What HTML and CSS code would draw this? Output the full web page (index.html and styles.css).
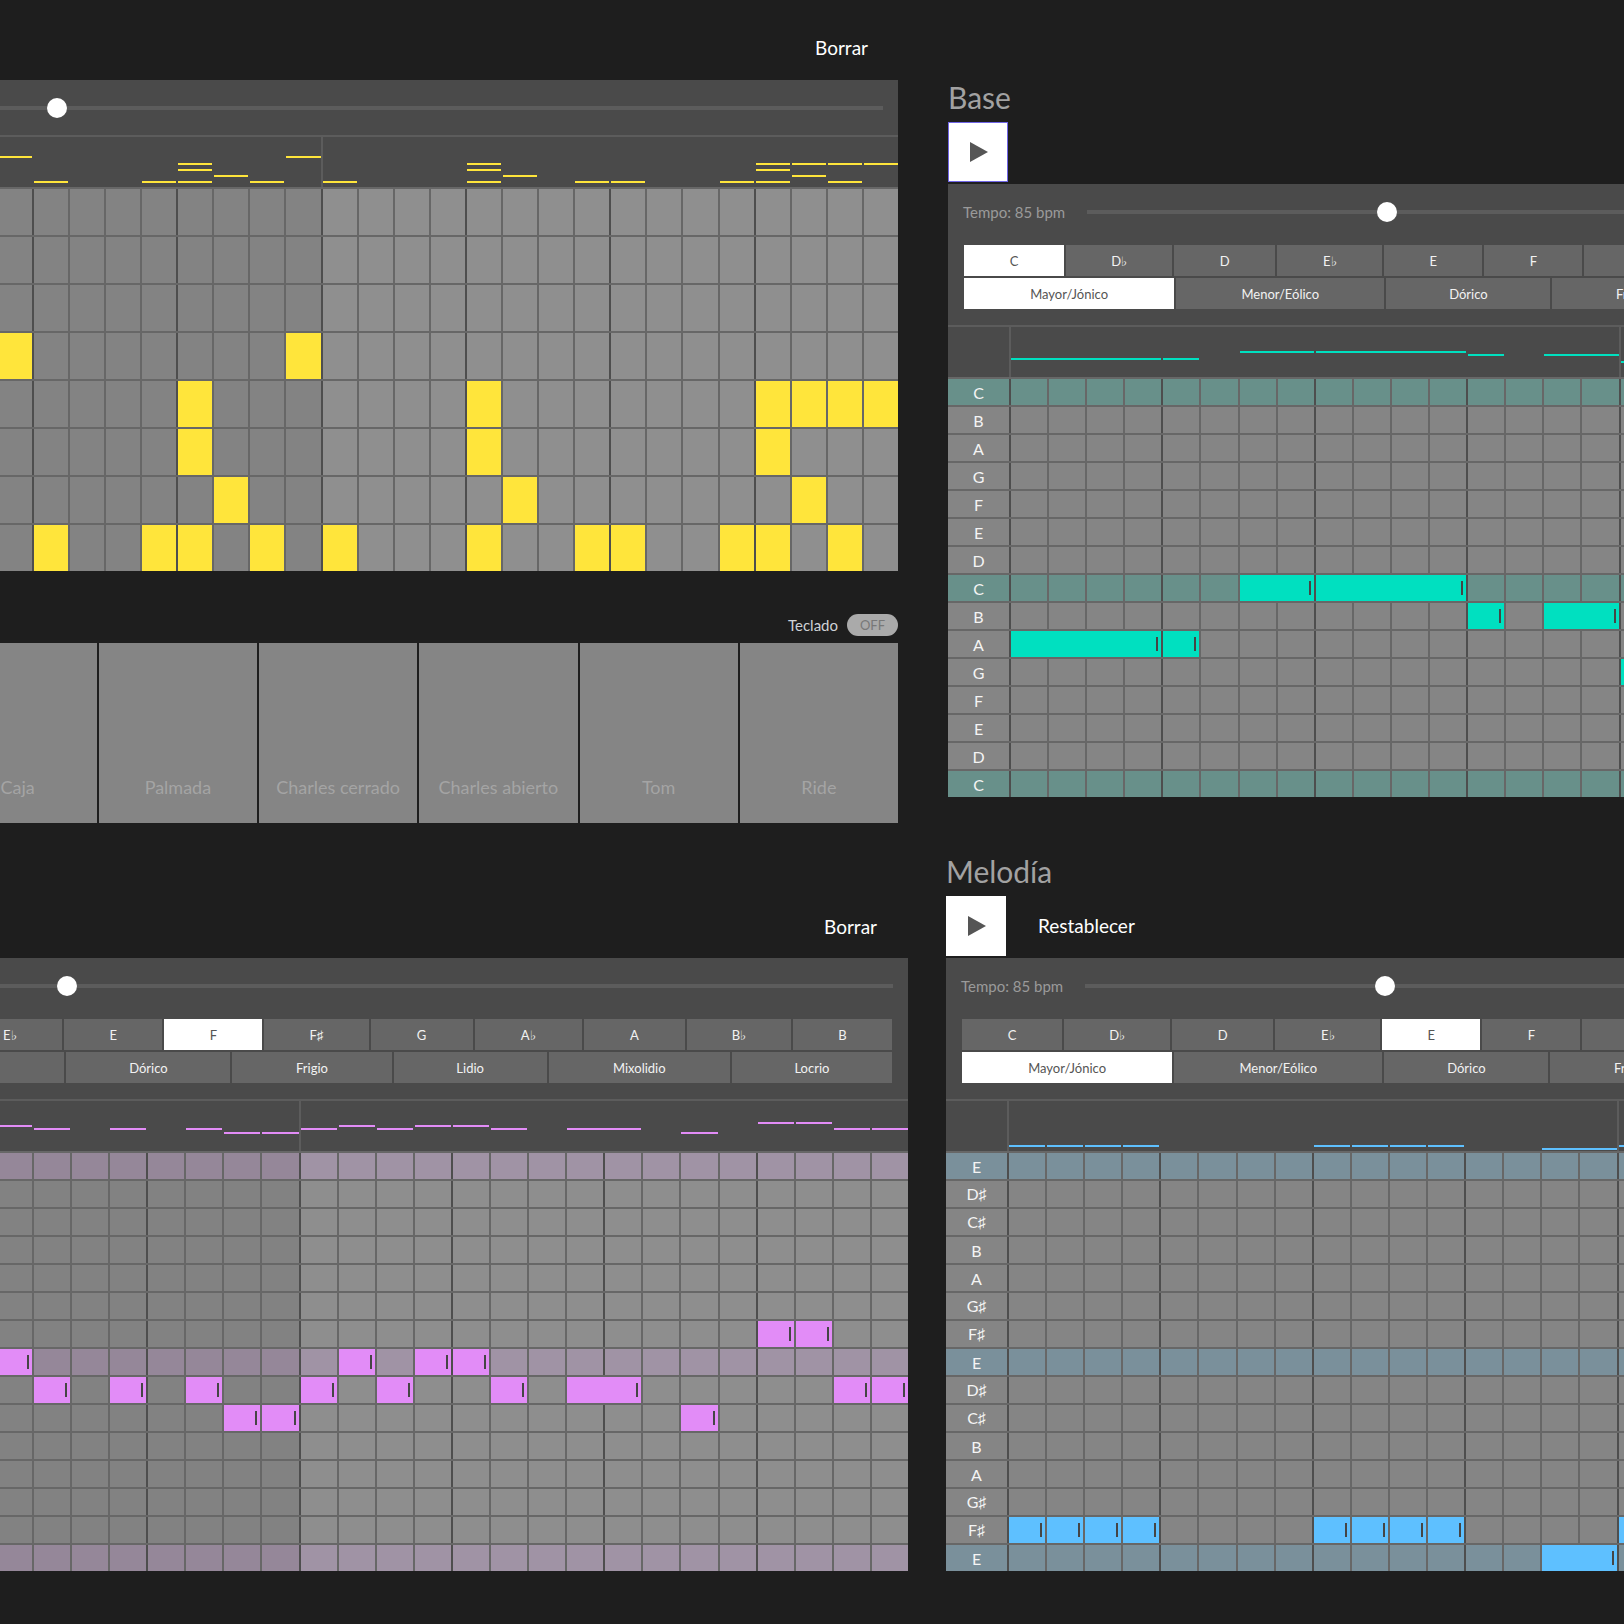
FILE: index.html
```html
<!DOCTYPE html>
<html lang="es">
<head>
<meta charset="utf-8">
<title>Estudio musical</title>
<link rel="stylesheet" href="styles.css">
</head>
<body>
<div class="page">

  <section class="sec drum">
    <div class="sec-head"><button class="txt-btn">Borrar</button></div>
    <div class="panel">
      <div class="tempo tempo-short">
        <span class="tempo-label">Tempo: 85 bpm</span>
        <div class="track"><span class="thumb"></span></div>
      </div>
      <div class="preview" data-preview="drum"></div>
      <div class="grid" data-grid="drum"></div>
    </div>
    <div class="kbd"><span class="kbd-label">Teclado</span><span class="toggle">OFF</span></div>
    <div class="pads">
      <div class="pad">Bombo</div>
      <div class="pad">Aro</div>
      <div class="pad">Caja</div>
      <div class="pad">Palmada</div>
      <div class="pad">Charles cerrado</div>
      <div class="pad">Charles abierto</div>
      <div class="pad">Tom</div>
      <div class="pad">Ride</div>
    </div>
  </section>

  <section class="sec base">
    <h2 class="title">Base</h2>
    <div class="controls">
      <button class="play focused" aria-label="Reproducir"><svg width="18" height="20" viewBox="0 0 18 20"><path d="M0 0 L18 10 L0 20 Z" fill="#555"/></svg></button>
    </div>
    <div class="panel">
      <div class="tempo">
        <span class="tempo-label">Tempo: 85 bpm</span>
        <div class="track"><span class="thumb"></span></div>
      </div>
      <div class="keyblock">
        <div class="keys">
          <span class="key sel">C</span><span class="key">D♭</span><span class="key">D</span><span class="key">E♭</span><span class="key">E</span><span class="key">F</span><span class="key">F♯</span><span class="key">G</span><span class="key">A♭</span><span class="key">A</span><span class="key">B♭</span><span class="key">B</span>
        </div>
        <div class="modes">
          <span class="key sel">Mayor/Jónico</span><span class="key">Menor/Eólico</span><span class="key">Dórico</span><span class="key">Frigio</span><span class="key">Lidio</span><span class="key">Mixolidio</span><span class="key">Locrio</span>
        </div>
      </div>
      <div class="preview" data-preview="base"></div>
      <div class="grid" data-grid="base"></div>
    </div>
  </section>

  <section class="sec mel-l">
    <div class="sec-head"><button class="txt-btn">Borrar</button></div>
    <div class="panel">
      <div class="tempo">
        <span class="tempo-label">Tempo: 85 bpm</span>
        <div class="track"><span class="thumb"></span></div>
      </div>
      <div class="keyblock">
        <div class="keys">
          <span class="key">C</span><span class="key">D♭</span><span class="key">D</span><span class="key">E♭</span><span class="key">E</span><span class="key sel">F</span><span class="key">F♯</span><span class="key">G</span><span class="key">A♭</span><span class="key">A</span><span class="key">B♭</span><span class="key">B</span>
        </div>
        <div class="modes">
          <span class="key sel">Mayor/Jónico</span><span class="key">Menor/Eólico</span><span class="key">Dórico</span><span class="key">Frigio</span><span class="key">Lidio</span><span class="key">Mixolidio</span><span class="key">Locrio</span>
        </div>
      </div>
      <div class="preview" data-preview="mell"></div>
      <div class="grid" data-grid="mell"></div>
    </div>
  </section>

  <section class="sec mel-r">
    <h2 class="title">Melodía</h2>
    <div class="controls">
      <button class="play" aria-label="Reproducir"><svg width="18" height="20" viewBox="0 0 18 20"><path d="M0 0 L18 10 L0 20 Z" fill="#555"/></svg></button>
      <button class="txt-btn reset">Restablecer</button>
    </div>
    <div class="panel">
      <div class="tempo">
        <span class="tempo-label">Tempo: 85 bpm</span>
        <div class="track"><span class="thumb"></span></div>
      </div>
      <div class="keyblock">
        <div class="keys">
          <span class="key">C</span><span class="key">D♭</span><span class="key">D</span><span class="key">E♭</span><span class="key sel">E</span><span class="key">F</span><span class="key">F♯</span><span class="key">G</span><span class="key">A♭</span><span class="key">A</span><span class="key">B♭</span><span class="key">B</span>
        </div>
        <div class="modes">
          <span class="key sel">Mayor/Jónico</span><span class="key">Menor/Eólico</span><span class="key">Dórico</span><span class="key">Frigio</span><span class="key">Lidio</span><span class="key">Mixolidio</span><span class="key">Locrio</span>
        </div>
      </div>
      <div class="preview" data-preview="melr"></div>
      <div class="grid" data-grid="melr"></div>
    </div>
  </section>

</div>
<script src="script.js"></script>
</body>
</html>
```

FILE: styles.css
```css
html, body {
  margin: 0;
  padding: 0;
  overflow: hidden;
  background: #1e1e1e;
  font-family: Lato, "Noto Sans", sans-serif;
  color: #fff;
}

.page {
  display: grid;
  grid-template-columns: 1290px 1280px;
  column-gap: 38px;
  row-gap: 17px;
  margin-left: -382px;
  align-items: start;
}

.sec { width: 1280px; }
.drum { justify-self: start; --lab: 125px; --rowh: 46px; --note: #ffe53b; }
.mel-l { justify-self: end; --lab: 61px; --rowh: 26px; --note: #e28cf7; }
.base { margin-left: 2px; padding-top: 79px; --lab: 61px; --rowh: 26px; --note: #00e0c0; }
.mel-r { padding-top: 13px; --lab: 61px; --rowh: 26px; --note: #5ec0ff; }

/* headers */
.sec-head {
  display: flex;
  justify-content: flex-end;
  align-items: flex-end;
  box-sizing: border-box;
}
.drum .sec-head { height: 80px; padding: 0 30px 21px 0; }
.mel-l .sec-head { height: 118px; padding: 0 31px 20px 0; }

.txt-btn {
  background: none;
  border: 0;
  padding: 0;
  color: #fff;
  font-family: inherit;
  font-size: 19px;
  line-height: 22px;
}

.title {
  margin: 0 0 7px;
  font-size: 30px;
  line-height: 36px;
  font-weight: 400;
  color: #a2a2a2;
}

.controls {
  display: flex;
  align-items: center;
  height: 60px;
}
.play {
  width: 60px;
  height: 60px;
  box-sizing: border-box;
  background: #fff;
  border: 0;
  padding: 0 0 0 22px;
  display: flex;
  align-items: center;
}
.play.focused { border: 1px solid #7065e6; padding-left: 21px; }
.reset { margin-left: 32px; }

/* panel */
.panel {
  background: #4a4a4a;
}
.base .panel, .mel-r .panel { margin-top: 2px; }

.tempo {
  height: 56px;
  display: flex;
  align-items: center;
  padding: 0 15px;
}
.tempo-short { height: 55px; }
.tempo-label {
  flex: none;
  width: 124px;
  font-size: 15px;
  color: #9a9a9a;
}
.track {
  flex: 1;
  height: 4px;
  background: #5c5c5c;
  position: relative;
}
.thumb {
  position: absolute;
  left: 26.6%;
  top: 50%;
  width: 20px;
  height: 20px;
  margin: -10px 0 0 -10px;
  border-radius: 50%;
  background: #fff;
}

.keyblock {
  display: flex;
  flex-direction: column;
  gap: 2px;
  margin-top: 5px;
  padding: 0 16px 16px;
}
.keys, .modes {
  display: grid;
  gap: 2px;
  height: 31px;
}
.keys { grid-template-columns: 100fr 106fr 101fr 105fr 98fr 98fr 104fr 102fr 107fr 101fr 104fr 99fr; }
.modes { grid-template-columns: 210fr 208fr 164fr 159fr 153fr 181fr 160fr; }
.key {
  background: #666;
  color: #f2f2f2;
  font-size: 13px;
  display: flex;
  align-items: center;
  justify-content: center;
}
.key.sel { background: #fff; color: #555; }

/* preview strip */
.preview {
  display: grid;
  grid-template-columns: var(--lab) repeat(32, 1fr);
  grid-template-rows: 50px;
  column-gap: 2px;
  border-top: 2px solid #5c5c5c;
}
.pv-bar {
  grid-row: 1;
  justify-self: start;
  width: 2px;
  margin-left: -2px;
  background: #5c5c5c;
}
.pv-note {
  grid-row: 1;
  align-self: start;
  height: 2px;
  background: var(--note);
}

/* grid */
.grid {
  display: flex;
  flex-direction: column;
  gap: 2px;
  padding-top: 2px;
  background: #676767;
}
.row {
  display: grid;
  grid-template-columns: var(--lab) repeat(32, 1fr);
  column-gap: 2px;
  height: var(--rowh);
}
.label {
  display: flex;
  align-items: center;
  justify-content: center;
  font-size: 16px;
  color: #f4f4f4;
  background: #858585;
}
.cell { background: #858585; }
.cell.beat { box-shadow: -2px 0 0 #4e4e4e; }

.drum .cell { background: #8f8f8f; }
.drum .cell.b1 { background: #838383; }
.drum .label { background: #838383; font-size: 14px; color: #ccc; }

.base .tonic .cell, .base .tonic .label { background: #68908a; }

.mel-l .cell { background: #8e8e8e; }
.mel-l .cell.b1 { background: #828282; }
.mel-l .tonic .cell { background: #a093a5; }
.mel-l .tonic .cell.b1, .mel-l .tonic .label { background: #958799; }

.mel-r .tonic .cell, .mel-r .tonic .label { background: #7a909b; }

.sec .grid .row .cell.on { background: var(--note); }
.marks .cell.on {
  display: flex;
  justify-content: flex-end;
  align-items: center;
  padding-right: 3px;
}
.marks .cell.on::after {
  content: "";
  width: 2px;
  height: 14px;
  background: #454545;
}

/* keyboard toggle + pads */
.kbd {
  display: flex;
  justify-content: flex-end;
  align-items: center;
  gap: 9px;
  height: 22px;
  margin-top: 43px;
}
.kbd-label { font-size: 15px; color: #cfd2d6; }
.toggle {
  width: 51px;
  height: 22px;
  border-radius: 11px;
  background: #aaa;
  color: #787878;
  font-size: 13px;
  display: flex;
  align-items: center;
  justify-content: center;
}
.pads {
  display: flex;
  gap: 2px;
  height: 180px;
  margin-top: 7px;
}
.pad {
  flex: 1;
  background: #858585;
  color: #a4a4a4;
  font-size: 18px;
  display: flex;
  align-items: flex-end;
  justify-content: center;
  padding-bottom: 25px;
  box-sizing: border-box;
}
```

FILE: script.js
```js
var CFG = {
  drum: {
    rows: 8, bars: true, marks: false, tonic: [],
    labels: ['Ride', 'Tom', 'Charles abierto', 'Charles cerrado', 'Palmada', 'Caja', 'Aro', 'Bombo'],
    notes: [[3,7,1],[3,15,1],
            [4,12,1],[4,20,1],[4,28,1],[4,29,1],[4,30,1],[4,31,1],
            [5,12,1],[5,20,1],[5,28,1],
            [6,13,1],[6,21,1],[6,29,1],
            [7,8,1],[7,11,1],[7,12,1],[7,14,1],[7,16,1],[7,20,1],[7,23,1],[7,24,1],[7,27,1],[7,28,1],[7,30,1]]
  },
  base: {
    rows: 15, bars: false, marks: true, tonic: [0,7,14],
    labels: ['C','B','A','G','F','E','D','C','B','A','G','F','E','D','C'],
    notes: [[7,6,2],[7,8,4],[8,12,1],[8,14,2],[9,0,4],[9,4,1],[10,16,2]]
  },
  mell: {
    rows: 15, bars: true, marks: true, tonic: [0,7,14],
    labels: ['F','E','D','C','B♭','A','G','F','E','D','C','B♭','A','G','F'],
    notes: [[6,28,1],[6,29,1],
            [7,8,1],[7,17,1],[7,19,1],[7,20,1],
            [8,9,1],[8,11,1],[8,13,1],[8,16,1],[8,18,1],[8,21,1],[8,23,2],[8,30,1],[8,31,1],
            [9,14,1],[9,15,1],[9,26,1]]
  },
  melr: {
    rows: 15, bars: false, marks: true, tonic: [0,7,14],
    labels: ['E','D♯','C♯','B','A','G♯','F♯','E','D♯','C♯','B','A','G♯','F♯','E'],
    notes: [[13,0,1],[13,1,1],[13,2,1],[13,3,1],[13,8,1],[13,9,1],[13,10,1],[13,11,1],[14,14,2],[13,16,1]]
  }
};

function el(cls) {
  var d = document.createElement('div');
  d.className = cls;
  return d;
}

function buildGrid(host, cfg) {
  var map = {};
  cfg.notes.forEach(function (n) { map[n[0] + ',' + n[1]] = n[2]; });
  if (cfg.marks) host.classList.add('marks');
  for (var r = 0; r < cfg.rows; r++) {
    var row = el('row' + (cfg.tonic.indexOf(r) >= 0 ? ' tonic' : ''));
    var lab = el('label');
    lab.textContent = cfg.labels[r] || '';
    row.appendChild(lab);
    for (var c = 0; c < 32;) {
      var span = map[r + ',' + c];
      var cls = 'cell';
      if (cfg.bars && c < 16) cls += ' b1';
      if (c % 4 === 0) cls += ' beat';
      var cell;
      if (span) {
        cell = el(cls + ' on');
        cell.style.gridColumn = 'span ' + span;
        c += span;
      } else {
        cell = el(cls);
        c++;
      }
      row.appendChild(cell);
    }
    host.appendChild(row);
  }
}

function buildPreview(host, cfg) {
  [0, 16].forEach(function (c) {
    var b = el('pv-bar');
    b.style.gridColumn = String(c + 2);
    host.appendChild(b);
  });
  cfg.notes.forEach(function (n) {
    var d = el('pv-note');
    d.style.gridColumn = (n[1] + 2) + ' / span ' + n[2];
    d.style.marginTop = (n[0] * 50 / cfg.rows + 0.5).toFixed(2) + 'px';
    host.appendChild(d);
  });
}

document.querySelectorAll('[data-grid]').forEach(function (h) { buildGrid(h, CFG[h.dataset.grid]); });
document.querySelectorAll('[data-preview]').forEach(function (h) { buildPreview(h, CFG[h.dataset.preview]); });
```
